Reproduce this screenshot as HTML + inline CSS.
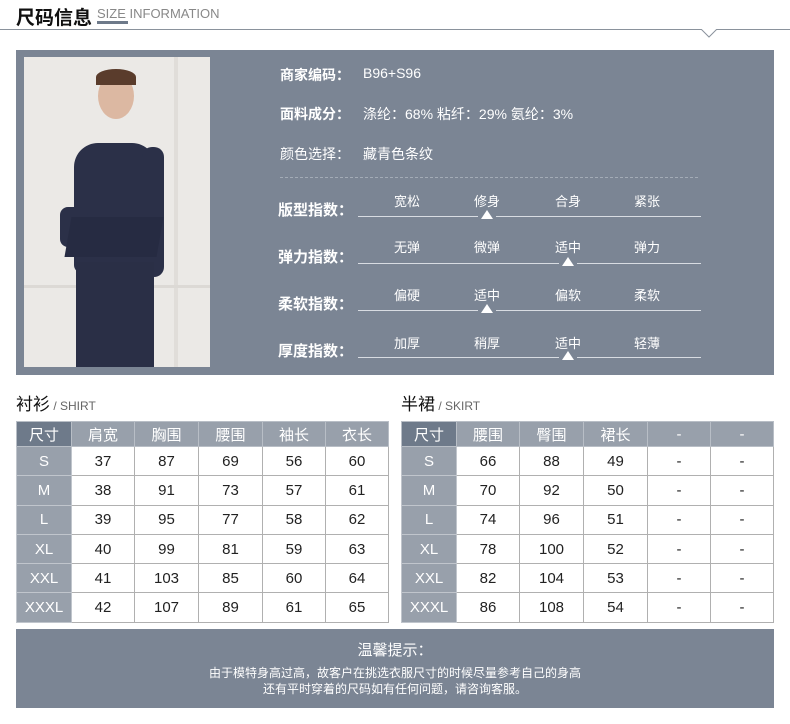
<!DOCTYPE html>
<html><head><meta charset="utf-8"><style>
*{margin:0;padding:0;box-sizing:border-box}
body{width:790px;height:724px;background:#fff;position:relative;overflow:hidden;font-family:"Liberation Sans","Noto Sans CJK SC",sans-serif;color:#333}
.a{position:absolute}
.panel{background:#7b8594}
.w{color:#fff}
.sl{position:absolute;left:358px;width:343px;height:1px;background:#d8dce2}
.tri{position:absolute;width:0;height:0;border-left:6px solid transparent;border-right:6px solid transparent;border-bottom:9px solid #fff}
.lab{position:absolute;font-size:13px;color:#fff;width:60px;text-align:center}
.big{position:absolute;left:278px;font-size:15px;color:#fff;font-weight:bold}
table{position:absolute;border-collapse:collapse;font-size:15px}
td{border:1px solid #b0b0b0;text-align:center;height:29.3px;color:#222}
tr.h td{height:25px;background:#98a0ab;color:#fff;border-color:#b8bec6}
tr.h td:first-child{background:#6e7a8a}
td.s{background:#98a0ab;color:#fff;border-color:#c0c5cc}
</style></head><body>
<div class="a" style="left:16px;top:3px;font-size:19px;color:#111;font-weight:bold">尺码信息</div>
<div class="a" style="left:97px;top:6px;font-size:13px;color:#888">SIZE INFORMATION</div>
<div class="a" style="left:97px;top:21px;width:31px;height:3px;background:#6e7a8a"></div>
<div class="a" style="left:0;top:29px;width:790px;height:1px;background:#8a929c"></div>
<svg class="a" style="left:700px;top:29px" width="18" height="10"><path d="M1 0 L9 8 L17 0" fill="#fff" stroke="#8a929c"/></svg>

<div class="a panel" style="left:16px;top:50px;width:758px;height:325px"></div>
<div class="a" style="left:24px;top:57px;width:186px;height:310px;background:#ebe9e6;overflow:hidden">
 <div class="a" style="left:150px;top:0;width:4px;height:310px;background:#e0ddd9"></div>
 <div class="a" style="left:0;top:228px;width:186px;height:3px;background:#dcd9d5"></div>
 <div class="a" style="left:74px;top:16px;width:36px;height:46px;border-radius:50%;background:#dcb8a2"></div>
 <div class="a" style="left:72px;top:12px;width:40px;height:16px;border-radius:50% 50% 0 0;background:#5a3c2c"></div>
 <div class="a" style="left:50px;top:86px;width:82px;height:130px;border-radius:24px 24px 8px 8px;background:#2b3048"></div>
 <div class="a" style="left:118px;top:90px;width:22px;height:130px;border-radius:10px;background:#2b3048"></div>
 <div class="a" style="left:36px;top:150px;width:28px;height:40px;border-radius:8px;background:#2b3048"></div>
 <div class="a" style="left:44px;top:160px;width:92px;height:40px;background:#262b42;transform:skewX(-10deg)"></div>
 <div class="a" style="left:52px;top:205px;width:78px;height:110px;background:#2a2f46"></div>
</div>

<div class="a w" style="left:280px;top:65px;font-size:14px;font-weight:bold">商家编码：</div><div class="a w" style="left:363px;top:65px;font-size:14px">B96+S96</div>
<div class="a w" style="left:280px;top:104px;font-size:14px;font-weight:bold">面料成分：</div><div class="a w" style="left:363px;top:104px;font-size:14px">涤纶：68% 粘纤：29% 氨纶：3%</div>
<div class="a w" style="left:280px;top:144px;font-size:14px">颜色选择：</div><div class="a w" style="left:363px;top:144px;font-size:14px">藏青色条纹</div>
<div class="a" style="left:280px;top:177px;width:418px;border-top:1px dashed #a3abb6"></div>

<div class="big" style="top:199px">版型指数：</div>
<div class="lab" style="left:377px;top:191px">宽松</div><div class="lab" style="left:457px;top:191px">修身</div><div class="lab" style="left:538px;top:191px">合身</div><div class="lab" style="left:617px;top:191px">紧张</div>
<div class="sl" style="top:216px"></div><div class="a panel" style="left:478px;top:213px;width:18px;height:5px"></div><div class="tri" style="left:481px;top:210px"></div>

<div class="big" style="top:246px">弹力指数：</div>
<div class="lab" style="left:377px;top:237px">无弹</div><div class="lab" style="left:457px;top:237px">微弹</div><div class="lab" style="left:538px;top:237px">适中</div><div class="lab" style="left:617px;top:237px">弹力</div>
<div class="sl" style="top:263px"></div><div class="a panel" style="left:559px;top:260px;width:18px;height:5px"></div><div class="tri" style="left:562px;top:257px"></div>

<div class="big" style="top:293px">柔软指数：</div>
<div class="lab" style="left:377px;top:285px">偏硬</div><div class="lab" style="left:457px;top:285px">适中</div><div class="lab" style="left:538px;top:285px">偏软</div><div class="lab" style="left:617px;top:285px">柔软</div>
<div class="sl" style="top:310px"></div><div class="a panel" style="left:478px;top:307px;width:18px;height:5px"></div><div class="tri" style="left:481px;top:304px"></div>

<div class="big" style="top:340px">厚度指数：</div>
<div class="lab" style="left:377px;top:333px">加厚</div><div class="lab" style="left:457px;top:333px">稍厚</div><div class="lab" style="left:538px;top:333px">适中</div><div class="lab" style="left:617px;top:333px">轻薄</div>
<div class="sl" style="top:357px"></div><div class="a panel" style="left:559px;top:354px;width:18px;height:5px"></div><div class="tri" style="left:562px;top:351px"></div>

<div class="a" style="left:16px;top:390px;font-size:17px;color:#111">衬衫<span style="font-size:12px;color:#666"> / SHIRT</span></div>
<div class="a" style="left:401px;top:390px;font-size:17px;color:#111">半裙<span style="font-size:12px;color:#666"> / SKIRT</span></div>

<table style="left:16px;top:421px;width:373px">
<colgroup><col style="width:55px"><col style="width:63px"><col style="width:64px"><col style="width:64px"><col style="width:63px"><col style="width:63px"></colgroup>
<tr class="h"><td>尺寸</td><td>肩宽</td><td>胸围</td><td>腰围</td><td>袖长</td><td>衣长</td></tr>
<tr><td class="s">S</td><td>37</td><td>87</td><td>69</td><td>56</td><td>60</td></tr>
<tr><td class="s">M</td><td>38</td><td>91</td><td>73</td><td>57</td><td>61</td></tr>
<tr><td class="s">L</td><td>39</td><td>95</td><td>77</td><td>58</td><td>62</td></tr>
<tr><td class="s">XL</td><td>40</td><td>99</td><td>81</td><td>59</td><td>63</td></tr>
<tr><td class="s">XXL</td><td>41</td><td>103</td><td>85</td><td>60</td><td>64</td></tr>
<tr><td class="s">XXXL</td><td>42</td><td>107</td><td>89</td><td>61</td><td>65</td></tr>
</table>
<table style="left:401px;top:421px;width:373px">
<colgroup><col style="width:55px"><col style="width:63px"><col style="width:64px"><col style="width:64px"><col style="width:63px"><col style="width:63px"></colgroup>
<tr class="h"><td>尺寸</td><td>腰围</td><td>臀围</td><td>裙长</td><td>-</td><td>-</td></tr>
<tr><td class="s">S</td><td>66</td><td>88</td><td>49</td><td>-</td><td>-</td></tr>
<tr><td class="s">M</td><td>70</td><td>92</td><td>50</td><td>-</td><td>-</td></tr>
<tr><td class="s">L</td><td>74</td><td>96</td><td>51</td><td>-</td><td>-</td></tr>
<tr><td class="s">XL</td><td>78</td><td>100</td><td>52</td><td>-</td><td>-</td></tr>
<tr><td class="s">XXL</td><td>82</td><td>104</td><td>53</td><td>-</td><td>-</td></tr>
<tr><td class="s">XXXL</td><td>86</td><td>108</td><td>54</td><td>-</td><td>-</td></tr>
</table>

<div class="a panel" style="left:16px;top:629px;width:758px;height:79px"></div>
<div class="a w" style="left:16px;top:639px;width:758px;text-align:center;font-size:15px">温馨提示：</div>
<div class="a w" style="left:16px;top:665px;width:758px;text-align:center;font-size:12px;line-height:16px">由于模特身高过高，故客户在挑选衣服尺寸的时候尽量参考自己的身高<br>还有平时穿着的尺码如有任何问题，请咨询客服。</div>
</body></html>
